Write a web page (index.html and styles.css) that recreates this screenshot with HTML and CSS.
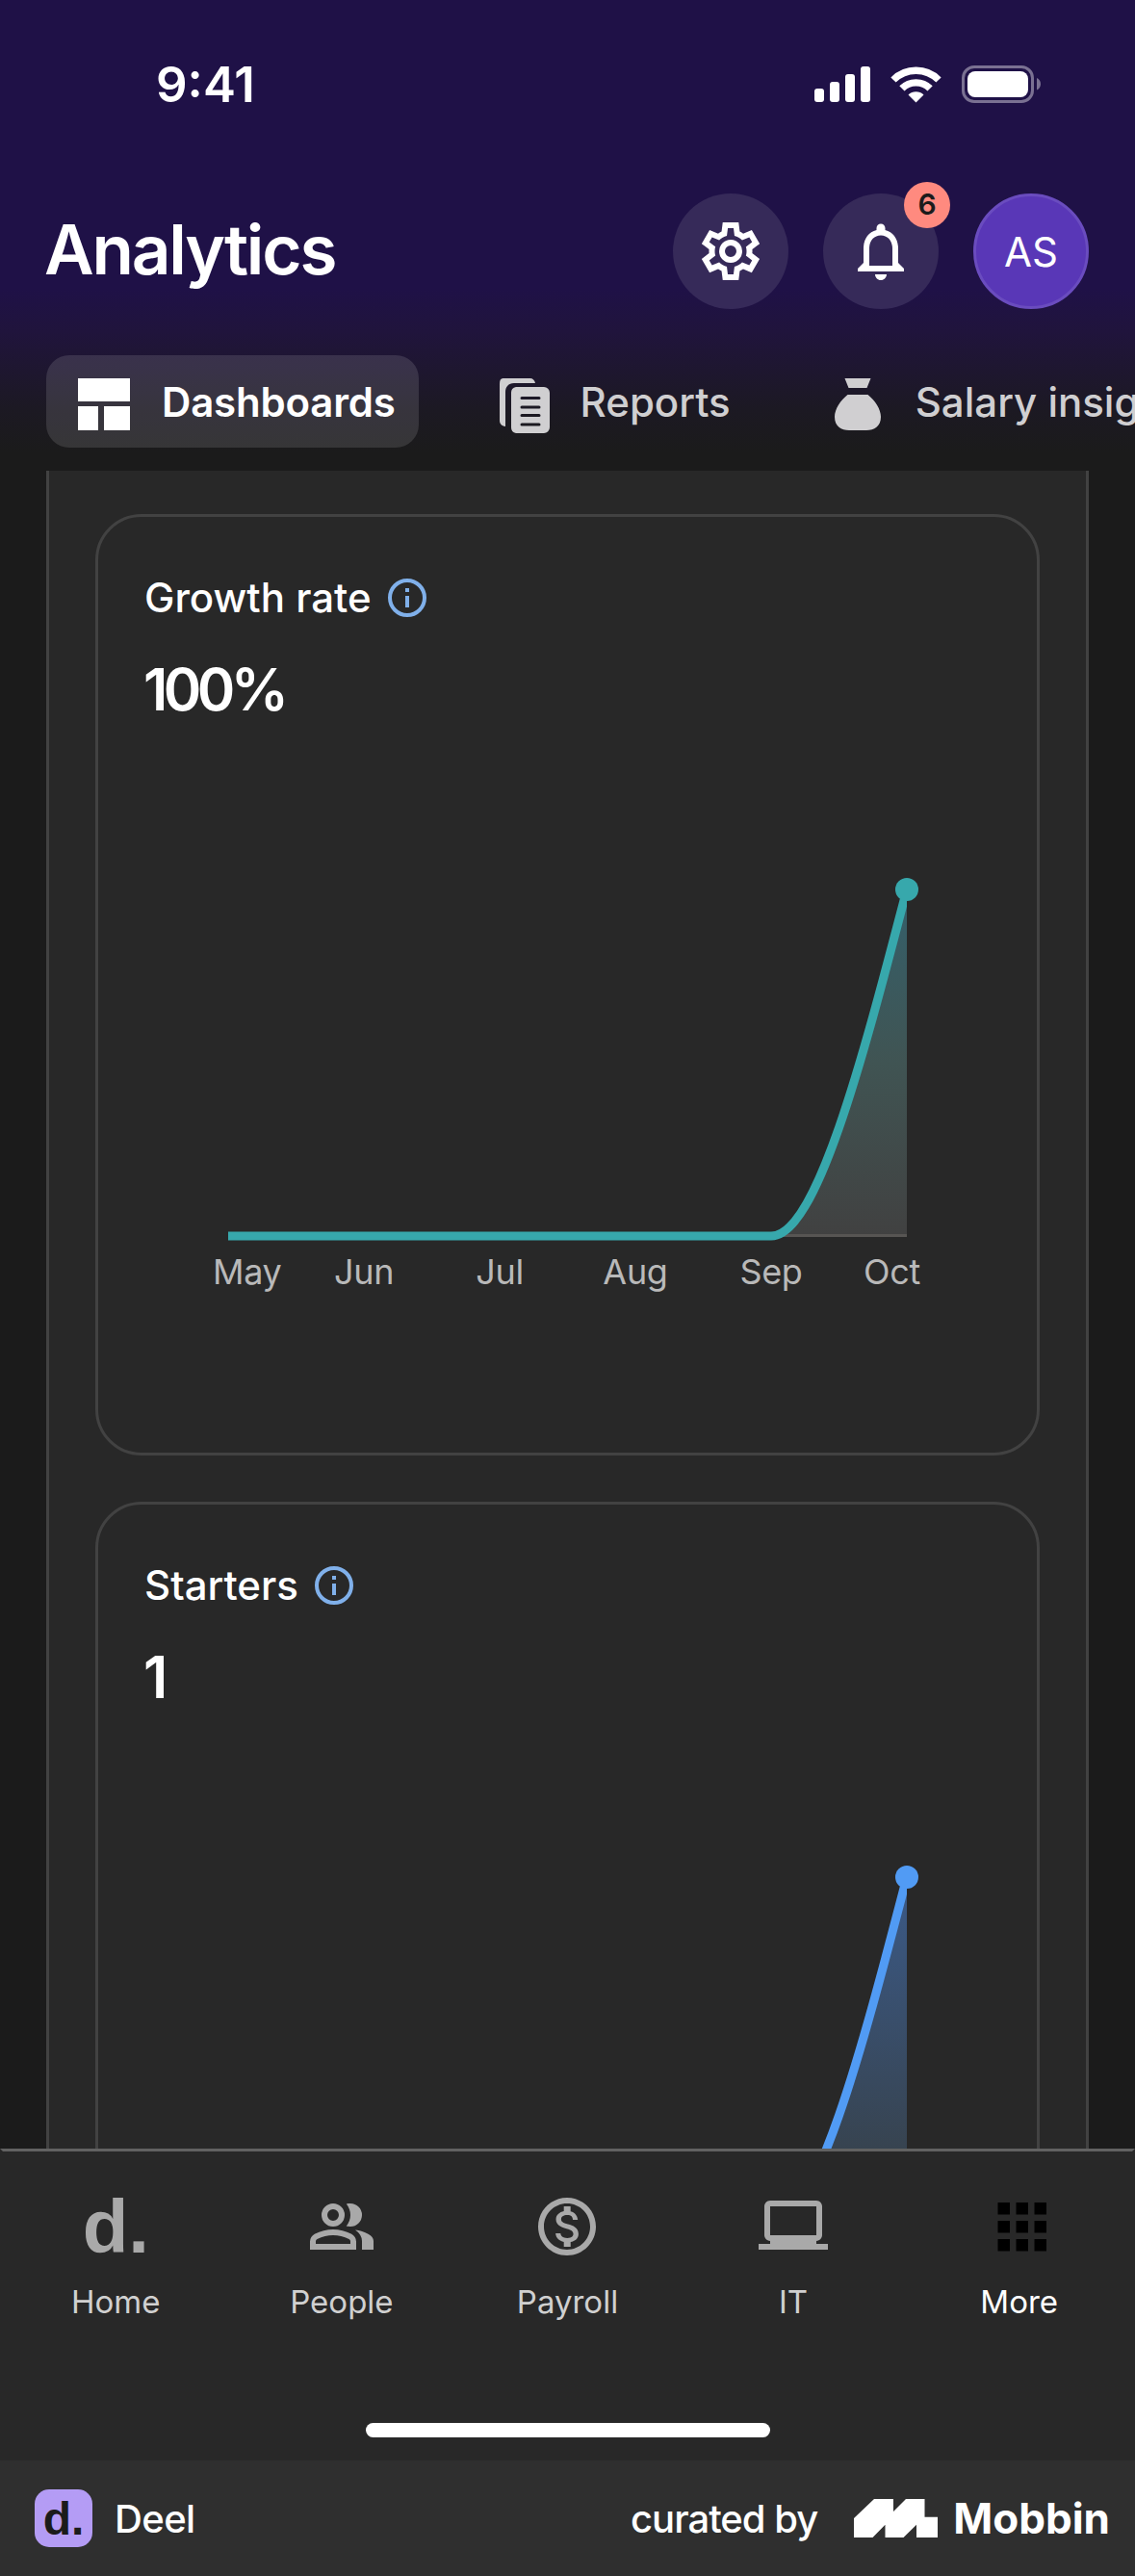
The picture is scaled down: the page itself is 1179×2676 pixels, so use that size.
FILE: index.html
```html
<!doctype html>
<html lang="en-US">
  <head>
    <meta charset="utf-8" />
    <title>Analytics</title>
    <meta name="viewport" content="width=device-width, initial-scale=1" />
    <link rel="stylesheet" href="styles.css">
  </head>
  <body>
    <div class="screen">
      <header>
        <div class="status-bar">
          <span class="time">9:41</span>
          <svg class="status-icons" width="235" height="40" viewBox="0 0 235 40">
            <g fill="#fff">
              <rect x="0" y="24" width="10" height="14" rx="3" />
              <rect x="16" y="17" width="10" height="21" rx="3" />
              <rect x="32" y="9" width="10" height="29" rx="3" />
              <rect x="48" y="1" width="10" height="37" rx="3" />
              <path d="M105.5 38.5l-8-8a11.5 11.5 0 0 1 16 0z" />
            </g>
            <g fill="none" stroke="#fff" stroke-width="7.4">
              <path d="M82 15a33.2 33.2 0 0 1 47 0" />
              <path d="M90.9 23.9a20.6 20.6 0 0 1 29.2 0" />
            </g>
            <rect x="154.5" y="1.5" width="72" height="36" rx="11.5" fill="none" stroke="#7a7192" stroke-width="3" />
            <rect x="159" y="6" width="63" height="27" rx="8" fill="#fff" />
            <path d="M231 13c2.5 1 4 3.5 4 6.2s-1.5 5.2-4 6.2z" fill="#7a7192" />
          </svg>
        </div>

        <div class="title-row">
          <h1>Analytics</h1>
          <div class="actions">
            <button class="round" aria-label="Settings">
              <svg viewBox="0 0 24 24">
                <path fill-rule="evenodd" d="m9.25 22-.4-3.2q-.325-.125-.612-.3-.288-.175-.563-.375L4.7 19.375l-2.75-4.75 2.575-1.95Q4.5 12.5 4.5 12.337v-.675q0-.162.025-.337L1.95 9.375l2.75-4.75 2.975 1.25q.275-.2.575-.375.3-.175.6-.3l.4-3.2h5.5l.4 3.2q.325.125.613.3.287.175.562.375l2.975-1.25 2.75 4.75-2.575 1.95q.025.175.025.337v.675q0 .163-.05.338l2.575 1.95-2.75 4.75-2.95-1.25q-.275.2-.575.375-.3.175-.6.3l-.4 3.2Zm1.75-2h1.975l.35-2.65q.775-.2 1.438-.587.662-.388 1.212-.938l2.475 1.025.975-1.7-2.15-1.625q.125-.35.175-.737.05-.388.05-.788t-.05-.787q-.05-.388-.175-.738l2.15-1.625-.975-1.7-2.475 1.05q-.55-.575-1.212-.963-.663-.387-1.438-.587L13 4h-1.975l-.35 2.65q-.775.2-1.437.587-.663.388-1.213.938L5.55 7.15l-.975 1.7 2.15 1.6q-.125.375-.175.75-.05.375-.05.8 0 .4.05.775.05.375.175.75l-2.15 1.625.975 1.7 2.475-1.05q.55.575 1.213.962.662.388 1.437.588Z" />
                <circle cx="12" cy="12" r="3" fill="none" stroke="#fff" stroke-width="2" />
              </svg>
            </button>
            <button class="round" aria-label="Notifications">
              <svg viewBox="0 0 24 24">
                <path d="M12 22c1.1 0 2-.9 2-2h-4c0 1.1.9 2 2 2zm6-6v-5c0-3.07-1.63-5.64-4.5-6.32V4c0-.83-.67-1.5-1.5-1.5s-1.5.67-1.5 1.5v.68C7.64 5.36 6 7.92 6 11v5l-2 2v1h16v-1l-2-2zm-2 1H8v-6c0-2.48 1.51-4.5 4-4.5s4 2.02 4 4.5v6z" />
              </svg>
              <span class="badge">6</span>
            </button>
            <div class="round avatar">AS</div>
          </div>
        </div>

        <div class="tabs">
          <a class="tab active">
            <svg viewBox="0 0 72 72">
              <path d="M9 9h54v24H9zM9 38h21v25H9zM36 38h27v25H36z" />
            </svg>
            <span>Dashboards</span>
          </a>
          <a class="tab">
            <svg viewBox="0 0 72 72">
              <path d="M15.5 9h28c3 0 5 2 5.5 5H27c-6 0-9 4-9 9v36c-4-.5-6-3-6-6V15c0-4 1-6 3.5-6z" />
              <path fill-rule="evenodd" d="M29 18h29a6 6 0 0 1 6 6v36a6 6 0 0 1-6 6H29a6 6 0 0 1-5-6V24a6 6 0 0 1 5-6zM35 28a1.5 1.5 0 0 0 0 3h18a1.5 1.5 0 0 0 0-3zM35 37.5a1.5 1.5 0 0 0 0 3h18a1.5 1.5 0 0 0 0-3zM35 46a1.5 1.5 0 0 0 0 3h18a1.5 1.5 0 0 0 0-3zM35 55.5a1.5 1.5 0 0 0 0 3h18a1.5 1.5 0 0 0 0-3z" />
            </svg>
            <span>Reports</span>
          </a>
          <a class="tab">
            <svg viewBox="0 0 72 72">
              <path d="M22.5 9h27l-4 10h-19zM25.500 26h21C54 32 60 41 60 49c0 10-7 14-15 14H27c-8 0-15-4-15-14 0-8 6-17 13.500-23z" />
            </svg>
            <span>Salary insights</span>
          </a>
        </div>
      </header>

      <main>
        <div class="panel">
          <section class="card">
            <h2>
              Growth rate
              <svg class="info" viewBox="0 0 48 48">
                <circle cx="24" cy="24" r="18" fill="none" stroke="#80b0ea" stroke-width="4" />
                <path d="M22 14h4v4h-4zM22 22h4v12h-4z" fill="#80b0ea" />
              </svg>
            </h2>
            <p class="value">100%</p>
            <svg class="chart" width="780" height="480" viewBox="0 0 780 480">
              <defs>
                <linearGradient id="teal-fade" x1="0" y1="0" x2="0" y2="1">
                  <stop offset="0" stop-color="#34606b" />
                  <stop offset="0.5" stop-color="#405453" />
                  <stop offset="1" stop-color="#414141" />
                </linearGradient>
                <clipPath id="plot">
                  <rect x="87" y="0" width="705" height="480" />
                </clipPath>
              </defs>
              <g clip-path="url(#plot)">
                <path d="M651 420C698 420 745 240 792 60V420z" fill="url(#teal-fade)" />
                <path d="M660 419.500H792" stroke="#575553" stroke-width="3" />
                <path d="M87 420H651C698 420 745 240 792 60" fill="none" stroke="#37a8ac" stroke-width="9" />
              </g>
              <circle cx="792" cy="60" r="12" fill="#37a8ac" />
              <g class="axis">
                <text x="71" y="470">May</text>
                <text x="228" y="470" text-anchor="middle">Jun</text>
                <text x="369" y="470" text-anchor="middle">Jul</text>
                <text x="510" y="470" text-anchor="middle">Aug</text>
                <text x="651" y="470" text-anchor="middle">Sep</text>
                <text x="806" y="470" text-anchor="end">Oct</text>
              </g>
            </svg>
          </section>

          <section class="card">
            <h2>
              Starters
              <svg class="info" viewBox="0 0 48 48">
                <circle cx="24" cy="24" r="18" fill="none" stroke="#80b0ea" stroke-width="4" />
                <path d="M22 14h4v4h-4zM22 22h4v12h-4z" fill="#80b0ea" />
              </svg>
            </h2>
            <p class="value">1</p>
            <svg class="chart" width="780" height="480" viewBox="0 0 780 480">
              <defs>
                <linearGradient id="blue-fade" x1="0" y1="0" x2="0" y2="1">
                  <stop offset="0" stop-color="#3b5a88" />
                  <stop offset="0.8" stop-color="#37434f" />
                  <stop offset="1" stop-color="#3b4045" />
                </linearGradient>
              </defs>
              <g clip-path="url(#plot)">
                <path d="M651 420C698 420 745 240 792 60V420z" fill="url(#blue-fade)" />
                <path d="M87 420H651C698 420 745 240 792 60" fill="none" stroke="#519bf4" stroke-width="9" />
              </g>
              <circle cx="792" cy="60" r="12" fill="#519bf4" />
            </svg>
          </section>
        </div>
      </main>

      <nav>
        <div class="nav-items">
          <a class="nav-item">
            <span class="logo">d.</span>
            <span>Home</span>
          </a>
          <a class="nav-item">
            <svg viewBox="0 0 24 24">
              <path d="M1 20v-2.8q0-.85.438-1.563.437-.712 1.162-1.087 1.55-.775 3.15-1.163Q7.35 13 9 13t3.25.387q1.6.388 3.15 1.163.725.375 1.162 1.087Q17 16.35 17 17.2V20Zm18 0v-3q0-1.1-.612-2.113-.613-1.012-1.738-1.737 1.275.15 2.4.512 1.125.363 2.1.888.9.5 1.375 1.112Q23 16.275 23 17v3ZM9 12q-1.65 0-2.825-1.175Q5 9.65 5 8q0-1.65 1.175-2.825Q7.35 4 9 4q1.65 0 2.825 1.175Q13 6.35 13 8q0 1.65-1.175 2.825Q10.65 12 9 12Zm10-4q0 1.65-1.175 2.825Q16.65 12 15 12q-.275 0-.7-.062-.425-.063-.7-.138.675-.8 1.037-1.775Q15 9.05 15 8q0-1.05-.363-2.025Q14.275 5 13.6 4.2q.35-.125.7-.163Q14.65 4 15 4q1.65 0 2.825 1.175Q19 6.35 19 8ZM3 18h12v-.8q0-.275-.137-.5-.138-.225-.363-.35-1.35-.675-2.725-1.013Q10.4 15 9 15t-2.775.337Q4.85 15.675 3.5 16.35q-.225.125-.362.35-.138.225-.138.5Zm6-8q.825 0 1.413-.588Q11 8.825 11 8t-.587-1.412Q9.825 6 9 6q-.825 0-1.412.588Q7 7.175 7 8t.588 1.412Q8.175 10 9 10Z" />
            </svg>
            <span>People</span>
          </a>
          <a class="nav-item">
            <svg viewBox="0 0 24 24">
              <path d="M12 2C6.48 2 2 6.48 2 12s4.48 10 10 10 10-4.48 10-10S17.52 2 12 2zm0 18c-4.41 0-8-3.59-8-8s3.59-8 8-8 8 3.59 8 8-3.59 8-8 8zm.31-8.86c-1.77-.45-2.34-.94-2.34-1.67 0-.84.79-1.43 2.1-1.43 1.38 0 1.9.66 1.94 1.64h1.71c-.05-1.34-.87-2.57-2.49-2.97V5H10.9v1.69c-1.51.32-2.72 1.3-2.72 2.81 0 1.79 1.49 2.69 3.66 3.21 1.95.46 2.34 1.15 2.34 1.87 0 .53-.39 1.39-2.1 1.39-1.6 0-2.23-.72-2.32-1.64H8.04c.1 1.7 1.36 2.66 2.86 2.97V19h2.34v-1.67c1.52-.29 2.72-1.16 2.73-2.77-.01-2.2-1.9-2.96-3.66-3.42z" />
            </svg>
            <span>Payroll</span>
          </a>
          <a class="nav-item">
            <svg viewBox="0 0 24 24">
              <path fill-rule="evenodd" d="M2 5c0-1.1.9-2 2-2h16c1.1 0 2 .9 2 2v10c0 1-.8 1.8-2 2v1h4v2H0v-2h4v-1c-1.2-.2-2-1-2-2zm2 0v10h16V5z" />
            </svg>
            <span>IT</span>
          </a>
          <a class="nav-item current">
            <svg viewBox="0 0 72 72">
              <path d="M13.5 11h12.5v12.5H13.5zM32.5 11H45v12.5H32.5zM51.5 11H64v12.5H51.5zM13.5 30h12.5v12.5H13.5zM32.5 30H45v12.5H32.5zM51.5 30H64v12.5H51.5zM13.5 49h12.5v12.5H13.5zM32.5 49H45v12.5H32.5zM51.5 49H64v12.5H51.5z" />
            </svg>
            <span>More</span>
          </a>
        </div>
        <div class="home-indicator"></div>
      </nav>

      <footer>
        <div class="app-icon">d.</div>
        <span class="app-name">Deel</span>
        <span class="curated">curated by</span>
        <svg width="87" height="40" viewBox="0 0 87 40">
          <path d="M0 20L21 0h20v13L54 0h19.5v18.7H87V40H65V26.7L51.5 40h-19V26.7L19.5 40H0z" fill="#fff" />
        </svg>
        <span class="mobbin">Mobbin</span>
      </footer>
    </div>
  </body>
</html>
```

FILE: styles.css
```css
* {
  box-sizing: border-box;
  margin: 0;
  padding: 0;
}

body {
  width: 1179px;
  background: #1b1b1b;
  color: #fff;
  font-family: Inter, "Liberation Sans", sans-serif;
}

.screen {
  display: flex;
  flex-direction: column;
  height: 2676px;
  overflow: hidden;
}

header {
  height: 489px;
  flex: none;
  background: linear-gradient(#1f1147 0, #1f1147 300px, #20143c 345px, #1c1923 425px, #1b1b1b 470px);
}

.status-bar {
  display: flex;
  justify-content: space-between;
  height: 201px;
  padding: 68px 98px 0 162px;
}

.time {
  font-size: 51px;
  font-weight: 600;
  line-height: 40px;
}

.title-row {
  display: flex;
  align-items: center;
  justify-content: space-between;
  height: 120px;
  padding: 0 48px 0 46px;
}

h1 {
  font-size: 71px;
  font-weight: 600;
  line-height: 116px;
  height: 120px;
  letter-spacing: -2.2px;
}

.actions {
  display: flex;
  gap: 36px;
}

.round {
  position: relative;
  display: flex;
  align-items: center;
  justify-content: center;
  width: 120px;
  height: 120px;
  border: 0;
  border-radius: 50%;
  background: #362a59;
  color: #fff;
  font-family: inherit;
}

.round svg {
  width: 72px;
  height: 72px;
  fill: #fff;
}

.badge {
  position: absolute;
  top: -12px;
  right: -12px;
  width: 48px;
  height: 48px;
  border-radius: 50%;
  background: #ff8a7f;
  color: #1b1b1b;
  font-size: 30px;
  font-weight: 600;
  line-height: 46px;
  text-align: center;
}

.avatar {
  border: 3px solid #6a4cbf;
  background: #5937b7;
  font-size: 42px;
  font-weight: 400;
}

.tabs {
  display: flex;
  gap: 48px;
  padding: 48px 0 0 48px;
  overflow: hidden;
}

.tab {
  display: flex;
  flex: none;
  align-items: center;
  gap: 24px;
  height: 96px;
  padding: 0 24px;
  border-radius: 24px;
  color: #d0cfd1;
  font-size: 42px;
  font-weight: 500;
  white-space: nowrap;
}

.tab svg {
  width: 72px;
  height: 72px;
  margin-top: 6px;
  fill: currentColor;
}

.tab.active {
  background: rgba(255, 255, 255, 0.12);
  color: #fff;
  font-weight: 600;
  letter-spacing: -0.2px;
}

main {
  flex: 1;
  padding: 0 48px;
  overflow: hidden;
}

.panel {
  display: grid;
  gap: 48px;
  padding: 45px 48px;
  border: 3px solid #424242;
  border-width: 0 3px;
  background: #282828;
}

.card {
  height: 978px;
  padding: 60px 48px;
  border: 3px solid #424242;
  border-radius: 48px;
}

h2 {
  display: flex;
  align-items: center;
  gap: 13px;
  height: 48px;
  font-size: 42px;
  font-weight: 500;
  line-height: 46px;
}

.info {
  width: 48px;
  height: 48px;
}

.value {
  margin-top: 35px;
  margin-left: -1px;
  font-size: 60px;
  font-weight: 600;
  line-height: 72px;
  letter-spacing: -4.6px;
}

.chart {
  display: block;
  margin-top: 112px;
  overflow: visible;
}

.axis {
  fill: #b9b9b9;
  font-size: 36px;
  letter-spacing: -0.3px;
}

nav {
  flex: none;
  height: 324px;
  padding-top: 42px;
  border: 3px solid transparent;
  border-top-color: #626262;
  border-bottom: 0;
  background: #282828;
}

.nav-items {
  display: grid;
  grid-template-columns: repeat(5, 1fr);
  height: 240px;
}

.nav-item {
  display: flex;
  flex-direction: column;
  align-items: center;
  gap: 20px;
  color: #d0d0d0;
  font-size: 33px;
  line-height: 44px;
}

.nav-item svg {
  width: 72px;
  height: 72px;
  fill: #a9a9a9;
}

.nav-item.current {
  color: #fff;
}

.nav-item.current svg {
  fill: #000;
}

.logo,
.app-icon {
  font-family: "Liberation Sans", Arial, sans-serif;
  font-weight: 700;
}

.logo {
  height: 72px;
  color: #a9a9a9;
  font-size: 78px;
  line-height: 72px;
}

.home-indicator {
  width: 420px;
  height: 15px;
  margin: 0 auto;
  border-radius: 8px;
  background: #fff;
}

footer {
  display: flex;
  flex: none;
  align-items: center;
  height: 120px;
  padding: 0 26px 0 36px;
  background: #2f2f2f;
  font-size: 40px;
  font-weight: 500;
}

.app-icon {
  width: 60px;
  height: 60px;
  border-radius: 15px;
  background: #b49cf5;
  color: #1b1b1b;
  font-size: 48px;
  line-height: 62px;
  text-align: center;
}

.app-name {
  margin-left: 23px;
  letter-spacing: -0.6px;
}

.curated {
  margin-left: auto;
  margin-right: 38px;
  letter-spacing: -1px;
}

.mobbin {
  margin-left: 16px;
  font-size: 44px;
  font-weight: 700;
}
```
